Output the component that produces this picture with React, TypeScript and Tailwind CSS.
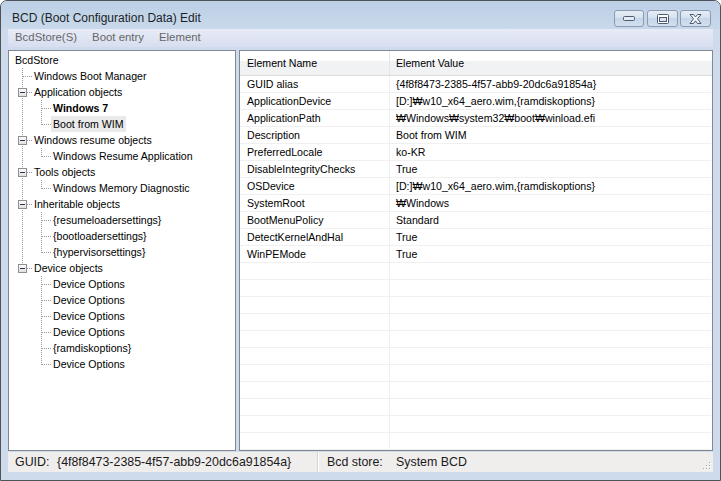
type Cell = 'pipe' | 'blank' | 'tee' | 'elbow';

interface TreeNode {
  label: string;
  cells: Cell[];
  box?: boolean;
  bold?: boolean;
  selected?: boolean;
}

const tree: TreeNode[] = [
  { label: 'BcdStore', cells: [] },
  { label: 'Windows Boot Manager', cells: ['tee'] },
  { label: 'Application objects', cells: ['tee'], box: true },
  { label: 'Windows 7', cells: ['pipe', 'tee'], bold: true },
  { label: 'Boot from WIM', cells: ['pipe', 'elbow'], selected: true },
  { label: 'Windows resume objects', cells: ['tee'], box: true },
  { label: 'Windows Resume Application', cells: ['pipe', 'elbow'] },
  { label: 'Tools objects', cells: ['tee'], box: true },
  { label: 'Windows Memory Diagnostic', cells: ['pipe', 'elbow'] },
  { label: 'Inheritable objects', cells: ['tee'], box: true },
  { label: '{resumeloadersettings}', cells: ['pipe', 'tee'] },
  { label: '{bootloadersettings}', cells: ['pipe', 'tee'] },
  { label: '{hypervisorsettings}', cells: ['pipe', 'elbow'] },
  { label: 'Device objects', cells: ['elbow'], box: true },
  { label: 'Device Options', cells: ['blank', 'tee'] },
  { label: 'Device Options', cells: ['blank', 'tee'] },
  { label: 'Device Options', cells: ['blank', 'tee'] },
  { label: 'Device Options', cells: ['blank', 'tee'] },
  { label: '{ramdiskoptions}', cells: ['blank', 'tee'] },
  { label: 'Device Options', cells: ['blank', 'elbow'] },
];

const elements: [string, string][] = [
  ['GUID alias', '{4f8f8473-2385-4f57-abb9-20dc6a91854a}'],
  ['ApplicationDevice', '[D:]₩w10_x64_aero.wim,{ramdiskoptions}'],
  ['ApplicationPath', '₩Windows₩system32₩boot₩winload.efi'],
  ['Description', 'Boot from WIM'],
  ['PreferredLocale', 'ko-KR'],
  ['DisableIntegrityChecks', 'True'],
  ['OSDevice', '[D:]₩w10_x64_aero.wim,{ramdiskoptions}'],
  ['SystemRoot', '₩Windows'],
  ['BootMenuPolicy', 'Standard'],
  ['DetectKernelAndHal', 'True'],
  ['WinPEMode', 'True'],
];

const listRows: [string, string][] = [
  ...elements,
  ...Array.from({ length: 12 }, (): [string, string] => ['', '']),
];

function Connector({ type, box, id }: { type: Cell; box?: boolean; id: string }) {
  const dot = { stroke: '#9a9a9a', strokeWidth: 1, strokeDasharray: '1 1' };
  return (
    <svg width="19" height="16" className="shrink-0" shapeRendering="crispEdges">
      {(type === 'pipe' || type === 'tee') && <line x1="9.5" y1="0" x2="9.5" y2="16" {...dot} />}
      {type === 'elbow' && <line x1="9.5" y1="0" x2="9.5" y2="9" {...dot} />}
      {(type === 'tee' || type === 'elbow') && <line x1="10" y1="8.5" x2="19" y2="8.5" {...dot} />}
      {box && (
        <>
          <defs>
            <linearGradient id={id} x1="0" y1="0" x2="0" y2="1">
              <stop offset="0" stopColor="#ffffff" />
              <stop offset="1" stopColor="#dedede" />
            </linearGradient>
          </defs>
          <rect x="5.5" y="4.5" width="8" height="8" fill={`url(#${id})`} stroke="#8e8f8f" />
          <line x1="7" y1="8.5" x2="12" y2="8.5" stroke="#26344f" />
        </>
      )}
    </svg>
  );
}

function CaptionButtons() {
  const btn =
    'flex h-[17px] items-center justify-center rounded-[3px] border border-[#8b9bb1] bg-[linear-gradient(to_bottom,#e6edf6_0%,#d6e2ef_45%,#c6d6e9_50%,#d2dfee_100%)]';
  return (
    <div className="mt-[9px] flex self-start">
      <div className={`${btn} w-[30px]`}>
        <svg width="12" height="5">
          <rect x="0.5" y="0.5" width="11" height="4" rx="1" fill="#e4eaf2" stroke="#4b5a70" />
        </svg>
      </div>
      <div className={`${btn} ml-[3px] w-[31px]`}>
        <svg width="12" height="10">
          <rect x="0.5" y="0.5" width="11" height="9" rx="1" fill="#ffffff" stroke="#4b5a70" />
          <rect x="2.5" y="3.5" width="7" height="4" fill="#d9e2ee" stroke="#4b5a70" />
        </svg>
      </div>
      <div className={`${btn} ml-[2px] w-[31px]`}>
        <svg width="13" height="10">
          <polygon
            points="1,0.5 4.5,0.5 6.5,3 8.5,0.5 12,0.5 8.5,4.8 12,9.5 8.5,9.5 6.5,6.8 4.5,9.5 1,9.5 4.5,4.8"
            fill="#f4f7fb"
            stroke="#4b5a70"
            strokeLinejoin="round"
          />
        </svg>
      </div>
    </div>
  );
}

function Grip() {
  const dots = [
    [7, 1],
    [7, 4],
    [4, 4],
    [7, 7],
    [4, 7],
    [1, 7],
  ];
  return (
    <svg width="10" height="10" className="mb-[1px] mr-[1px] self-end">
      {dots.map(([x, y]) => (
        <g key={`${x}-${y}`}>
          <rect x={x + 1} y={y + 1} width="1" height="1" fill="#ffffff" />
          <rect x={x} y={y} width="1" height="1" fill="#a6a6a6" />
        </g>
      ))}
    </svg>
  );
}

export default function App() {
  return (
    <div className="h-[481px] w-[721px] bg-white font-['Liberation_Sans',Arial,sans-serif]">
      <div className="flex h-full w-full flex-col overflow-hidden rounded-t-[7px] border border-[#4f5359] bg-[#cddbec]">
        {/* title bar */}
        <div className="flex h-[28px] shrink-0 bg-[linear-gradient(to_bottom,#bccfe5,#c9d9eb)] pl-[11px] pr-[9px]">
          <span className="mt-[9px] text-[12px] leading-[16px] text-[#1b1f26]">BCD (Boot Configuration Data) Edit</span>
          <div className="ml-auto">
            <CaptionButtons />
          </div>
        </div>

        {/* menu */}
        <div className="mx-[7px] flex h-[18px] shrink-0 items-center gap-[15px] bg-[linear-gradient(to_bottom,#e6ebf6,#d8def0)] pl-[7px] text-[11.4px] text-[#666666]">
          <span>BcdStore(S)</span>
          <span>Boot entry</span>
          <span>Element</span>
        </div>

        {/* panels */}
        <div className="mx-[7px] mt-[3px] flex h-[401px] shrink-0 gap-[3px]">
          <div className="w-[228px] shrink-0 overflow-hidden border border-[#828790] bg-white pt-[1px] text-[10.6px] text-black">
            {tree.map((node, i) => (
              <div key={i} className="flex h-[16px] items-center pl-[4px]">
                {node.cells.map((c, j) => (
                  <Connector key={j} type={c} box={node.box && j === node.cells.length - 1} id={`bx${i}`} />
                ))}
                <span
                  className={`whitespace-nowrap px-[2px] leading-[16px] ${node.bold ? 'font-bold' : ''} ${
                    node.selected ? 'bg-[#eaeaea]' : ''
                  }`}
                >
                  {node.label}
                </span>
              </div>
            ))}
          </div>

          <div className="flex-1 overflow-hidden border border-[#828790] bg-white text-[10.6px] text-black">
            <div className="flex h-[25px] border-b border-[#dcdcdc] bg-[linear-gradient(to_bottom,#ffffff_0%,#ffffff_40%,#f1f2f4_40%,#f1f2f4_100%)] leading-[24px]">
              <div className="w-[150px] shrink-0 border-r border-[#e3e6ea] pl-[7px]">Element Name</div>
              <div className="pl-[6px]">Element Value</div>
            </div>
            {listRows.map(([name, value], i) => (
              <div key={i} className="mr-[1px] flex h-[17px] border-b border-[#f0f0f0] leading-[16px]">
                <div className="w-[150px] shrink-0 whitespace-nowrap border-r border-[#f0f0f0] pl-[7px]">{name}</div>
                <div className="whitespace-nowrap pl-[6px]">{value}</div>
              </div>
            ))}
          </div>
        </div>

        {/* status bar */}
        <div className="mx-[7px] mt-[1px] flex h-[20px] shrink-0 bg-[#f0eded] text-[12.4px] leading-[20px] text-[#1a1a1a]">
          <div className="flex w-[310px] shrink-0 border-r border-[#d6d1d0] pl-[7px]">
            <span className="w-[42px]">GUID:</span>
            <span>{'{4f8f8473-2385-4f57-abb9-20dc6a91854a}'}</span>
          </div>
          <div className="flex flex-1 border-l border-white pl-[8px]">
            <span className="w-[69px]">Bcd store:</span>
            <span>System BCD</span>
            <div className="ml-auto flex">
              <Grip />
            </div>
          </div>
        </div>
      </div>
    </div>
  );
}
